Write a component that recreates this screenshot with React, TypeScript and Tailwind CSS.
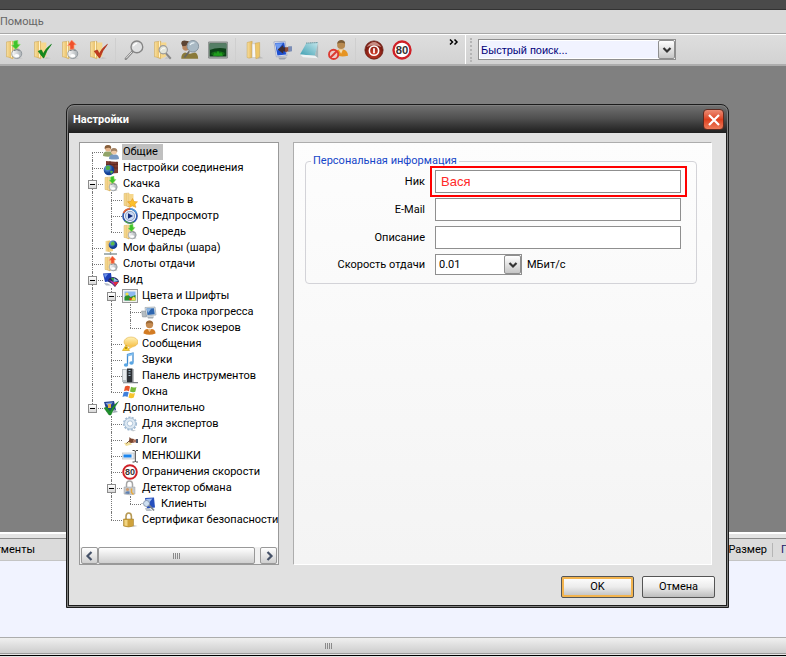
import type { ReactNode } from "react"
import clsx from "clsx"

/* ---------- icons, all on a 16x16 grid ---------- */

const Folder = () => (
    <>
        <path d="M2 1.5 7 1v14l-4-1.5H2z" fill="url(#folder)" stroke="#c9a14a" strokeWidth=".4" />
        <path d="M7 2h4.5v11L7 15z" fill="#f6d78c" />
        <path d="M6 1v13" stroke="#fff3cd" strokeWidth=".8" />
        <path d="M11.5 13.5 15 14.5l-5 .8z" fill="#b9b9b9" opacity=".6" />
    </>
)

const Bottle = () => (
    <>
        <ellipse cx="10.2" cy="11" rx="4" ry="3.8" fill="url(#silver)" stroke="#8d9499" strokeWidth=".7" />
        <path d="M8 8.5q2.300-1.500 4.500 0" stroke="#6d7478" strokeWidth=".7" fill="none" />
        <ellipse cx="10.200" cy="12.500" rx="2" ry="1.300" fill="#fff" />
    </>
)

const icons: Record<string, ReactNode> = {
    download: (
        <>
            <Folder />
            <Bottle />
            <path d="M7.500 1 11 0v3.300l2 .2-3.500 4L6 4.200l1.700-.2z" fill="#3fc32a" stroke="#8be070" strokeWidth=".5" />
        </>
    ),
    upload: (
        <>
            <Folder />
            <Bottle />
            <path d="M9.300 0 13 3.800l-1.800.1v3.300L8 7.500V4.300l-2 .3z" fill="#f0522c" stroke="#ffa083" strokeWidth=".5" />
        </>
    ),
    folderCheck: (
        <>
            <Folder />
            <path d="M5 9 7.500 8l1.500 3q2-4.500 6.500-7.500Q11.500 8 9.300 14.500z" fill="#138a1e" stroke="#0b7a14" strokeWidth=".6" />
        </>
    ),
    folderRed: (
        <>
            <Folder />
            <path d="M5 9 7.500 8l1.500 3q2-4.500 6.500-7.500Q11.500 8 9.300 14.500z" fill="#c43a20" stroke="#a83018" strokeWidth=".6" />
        </>
    ),
    magnifier: (
        <>
            <path d="M1.500 15 7 9" stroke="#858585" strokeWidth="2" strokeLinecap="round" />
            <path d="M1.700 14.600 6.500 9.400" stroke="#e4e4e4" strokeWidth=".8" />
            <circle cx="10.300" cy="5.500" r="4.700" fill="#dfe0e1" stroke="#858585" strokeWidth="1.100" />
            <path d="M7.500 5q.7-2.200 3-2.300" stroke="#fff" fill="none" />
        </>
    ),
    folderSearch: (
        <>
            <Folder />
            <path d="M11 10.500 15 15" stroke="#888" strokeWidth="1.600" />
            <circle cx="9" cy="7.800" r="3.300" fill="#dfe8ec" fillOpacity=".8" stroke="#9b9b9b" strokeWidth=".9" />
            <path d="M7 8.500q1.500-2.800 3.500-2" stroke="#fff" fill="none" strokeWidth=".8" />
        </>
    ),
    userSearch: (
        <>
            <path d="M1 15q0-4.500 3-5l4 1 4-1q2.500 1 2.500 5z" fill="#8a7a3a" />
            <path d="M1.500 1h5.500v6.500q-3 2.500-5-.5z" fill="#b98760" />
            <path d="M1 3q0-3 3.500-2.500L7 1 5 4.500 2 5z" fill="#5d4433" />
            <path d="M7.500 9 3.500 14" stroke="#666" strokeWidth="1.300" />
            <circle cx="10.300" cy="5" r="4.600" fill="#a9b9c4" stroke="#8795a0" strokeWidth=".8" />
            <path d="M8 4q1.200-2 3.500-1.700" stroke="#e9f2f6" fill="none" />
        </>
    ),
    monitor: (
        <>
            <rect x="0" y="1.500" width="16" height="13" rx="1" fill="#a3a8a6" stroke="#6f7472" strokeWidth=".5" />
            <rect x="1.300" y="2.800" width="13.400" height="10.400" fill="#0d4218" />
            <path d="M1.300 2.800h13.400V7q-7-1.500-13.400 1z" fill="#557f66" />
            <ellipse cx="8" cy="11" rx="5.500" ry="2" fill="#146e17" />
            <path d="M4 12.500 5.500 9.500l1 1.500 1.500-2.500 1.500 2.500 1-1.500 1.500 3z" fill="#1f9e1c" />
        </>
    ),
    folderOpen: (
        <>
            <path d="M2.500 2 6.500 1v13L4 14.500 2.500 14z" fill="url(#folder)" stroke="#c9a14a" strokeWidth=".4" />
            <path d="M6.500 3h3.500v11H6.500z" fill="#f7f7f7" stroke="#bbb" strokeWidth=".4" />
            <path d="M9 2.500 12.500 2v12l-3 1z" fill="#edc76c" stroke="#c9a14a" strokeWidth=".4" />
            <path d="m12.500 13 3 1.500-5 .5z" fill="#aaa" opacity=".6" />
        </>
    ),
    screenBack: (
        <>
            <path d="M1.500 1.500 10.500 1l1.500 11.500-8.500 1z" fill="#e4e8f2" stroke="#8b95b5" strokeWidth=".5" />
            <path d="M2.500 2.300 9.800 2l1.500 9.500-7 .8z" fill="#1d4fd0" />
            <path d="m2.700 2.500 6 0-4.500 6z" fill="#6f9cf2" />
            <path d="m4.500 7.500 4.500-3.500v1.800q2.500 0 3 .7v2.500q-1.500.3-3 0v2z" fill="#3c2d35" />
            <path d="M10.500 6 13.500 5.500v3.500l-3 .5z" fill="#8d4a35" />
            <path d="M13 5h3v4l-3 .5z" fill="#7a8cb5" />
            <path d="M5 14h7l-2 1.500H6z" fill="#9aa0ac" />
        </>
    ),
    notepad: (
        <>
            <path d="m5 2.500 9.500-.5-2.500 10.500L0 11.500z" fill="url(#teal)" />
            <path d="M14.500 2v12.500L12 12.500z" fill="#a6b6ba" />
            <path d="m0 11.500 12 1 2.500 2-12-.8z" fill="#eef3f4" />
            <path d="m5 2.500 9.500-.5" stroke="#5c8b95" strokeWidth=".9" strokeDasharray="1 .6" />
        </>
    ),
    userBan: (
        <>
            <circle cx="10.500" cy="4" r="3.200" fill="#b88a50" />
            <path d="M7.300 3q.5-3 3.300-3 3 0 3.100 3-3-1.500-6.400 0z" fill="#7b5c35" />
            <path d="M5.500 12q.5-4 3.500-4.500h3.200Q16 8.500 16 12.500q-5 1.500-10.500-.5z" fill="#e69422" />
            <path d="m8.500 7.500 3.500 0-1.500 3.500z" fill="#f6dcae" />
            <circle cx="4.500" cy="11.500" r="3.700" fill="#ecc9c5" stroke="#dc3a31" strokeWidth="1.500" />
            <path d="m2 14 5-5" stroke="#dc3a31" strokeWidth="1.500" />
        </>
    ),
    power: (
        <>
            <circle cx="8" cy="8" r="7.300" fill="url(#red)" stroke="#6b2118" strokeWidth=".6" />
            <path d="M2 5.500Q8-2.500 14 5.500 8 3 2 5.500z" fill="#dba79e" opacity=".8" />
            <circle cx="8" cy="8.500" r="3.700" fill="none" stroke="#fff" strokeWidth="1.300" />
            <path d="M8 6.500v4" stroke="#fff" strokeWidth="1.400" />
        </>
    ),
    speed: (
        <>
            <circle cx="8" cy="8" r="6.800" fill="#fff" stroke="#cf2027" strokeWidth="1.900" />
            <text x="8" y="11.200" textAnchor="middle" fontSize="9" fontWeight="700" fontFamily="Liberation Sans" fill="#333">
                80
            </text>
        </>
    ),
    users: (
        <>
            <path d="M0 12q0-4 3-4.500h4q3 .5 3 4.500-5 1.500-10 0z" fill="#91a469" />
            <circle cx="5" cy="4.500" r="3" fill="#e5b58c" />
            <path d="M1.700 5Q1 1 5 1t3 4Q6 2.500 1.700 5z" fill="#875f3c" />
            <path d="M6 15q0-4 3-4.500h4q3 .5 3 4.500-5 1-10 0z" fill="#7798c2" />
            <circle cx="11" cy="7.500" r="3" fill="#edc8a5" />
            <path d="M7.700 8Q7.300 4 11 4t3.300 4q-3-2.500-6.600 0z" fill="#a28365" />
        </>
    ),
    connection: (
        <>
            <path d="m3 1 12 1v11l-12 1z" fill="#7b3b31" />
            <path d="M3 4.500h12M3 8h12M7 1v3.500M11 4.500V8M14 1.500v3" stroke="#57241d" strokeWidth=".7" />
            <circle cx="6" cy="10" r="5.300" fill="url(#globe)" />
            <path d="M3 6.500q3-2 4 .5t-2 3-2-3.500M7 11q3-1 3 1l-2 2z" fill="#4fae45" />
        </>
    ),
    folderStar: (
        <>
            <Folder />
            <path d="m10.500 6.500 1.500 3 3.500.3-2.500 2.400.8 3.300-3.300-1.700-3 1.700.6-3.500-2.600-2.200 3.500-.4z" fill="#fbc02c" stroke="#e08e1b" strokeWidth=".5" />
        </>
    ),
    player: (
        <>
            <circle cx="8" cy="8" r="7" fill="#fff" stroke="#2f57ad" strokeWidth="1.700" />
            <path d="M1.500 5A7 7 0 0 1 8 1" stroke="#e8612b" strokeWidth="1.600" fill="none" />
            <path d="M8 1a7 7 0 0 1 6.500 4.500" stroke="#4f96d8" strokeWidth="1.600" fill="none" />
            <path d="M3 13a7 7 0 0 0 9 1" stroke="#55a63e" strokeWidth="1.400" fill="none" />
            <circle cx="8" cy="8" r="4.700" fill="#c9d9f2" stroke="#7d93bb" strokeWidth=".9" />
            <path d="m6 5.200 5 2.800-5 2.800z" fill="#132a78" />
        </>
    ),
    share: (
        <>
            <path d="M2.500 1 7 .5V12l-3.500-.5h-1z" fill="url(#folder)" />
            <path d="M6 1.500h4V11l-4 1z" fill="#f3d27f" />
            <circle cx="10" cy="4.800" r="4.300" fill="url(#globe)" />
            <path d="M8 2.500q3-2 3.500.5t-2 2.500-1.500-3" fill="#58b84c" />
            <path d="M1 14h13M7.500 12v3" stroke="#8c9a9c" strokeWidth="1.300" />
        </>
    ),
    view: (
        <>
            <path d="M0 1.500 8 1l1 8-7 1z" fill="#1d3fb8" />
            <path d="m1 2.300 4-.2-3 4z" fill="#6f97ef" />
            <path d="M5 9.500q0-4 5-4.500 5 .5 6 4.500l-4 5.500q-2-3-7-5.500z" fill="#232a63" />
            <path d="M8 6h3l-.5 4z" fill="#3aa13b" />
            <path d="m11 6 4.500 3-5 1z" fill="#8fc2ee" />
            <path d="m10.500 10 5 0-3.500 4.500z" fill="#e32f3a" />
            <path d="m6 8 4.500 2L12 14z" fill="#c237b8" />
            <path d="m1 11 4 .5 3 2H3z" fill="#b3bac5" />
        </>
    ),
    picture: (
        <>
            <rect x=".5" y="1.500" width="15" height="13" fill="#f2f2f2" stroke="#989898" />
            <rect x="2.500" y="3.500" width="11" height="9" fill="#8db9f2" />
            <path d="M2.500 12.500V9q3-4 6 0l5-2v5.500z" fill="#2e8e28" />
            <path d="m8 12.500 3.500-4 2 1.500v2.500z" fill="#f0e04c" />
            <circle cx="5" cy="6" r="1.600" fill="#f0e04c" />
            <circle cx="8.500" cy="11" r="1.300" fill="#d63529" />
        </>
    ),
    progress: (
        <>
            <path d="M4 3.500 14 3l1 8-10 1z" fill="#dbe2e7" stroke="#8d99a1" strokeWidth=".6" />
            <path d="m5.500 4.500 7.500-.3.700 6-7.200.8z" fill="#2f67b0" />
            <path d="m5.500 4.500 5-.2L7 9z" fill="#8bb6e4" />
            <path d="M.5 7h4l1 6h-4z" fill="#b5bdc2" stroke="#868f94" strokeWidth=".5" />
            <path d="M6 12.500h7l-1 2H7z" fill="#a7afb4" />
        </>
    ),
    user: (
        <>
            <circle cx="8.500" cy="4.500" r="3.700" fill="#c58b51" />
            <path d="M4.800 4Q5 .5 8.500.5T12.200 4Q9 2.200 4.800 4z" fill="#9c6a38" />
            <path d="M2.500 13.500Q2.500 9.500 6 9h5q3.500.5 3.500 4.500-6 2.500-12 0z" fill="#d37c24" />
            <path d="M6.500 9h4l-2 3z" fill="#f3c893" />
        </>
    ),
    message: (
        <>
            <ellipse cx="9" cy="6" rx="7" ry="5" fill="url(#bubble)" stroke="#dda83a" strokeWidth=".5" />
            <path d="m8 10 3.500.5L6 14z" fill="#f8c758" />
            <path d="m4 9 3.500 5.500H.5z" fill="#ffd52c" stroke="#c99a12" strokeWidth=".6" />
            <path d="M4 11v2" stroke="#6a4a00" />
        </>
    ),
    music: (
        <>
            <path d="M5.500 12.500V2.500L11 1v9.500" stroke="#3f8bd0" strokeWidth="1.300" fill="none" />
            <path d="M5.500 3.500 11 2" stroke="#7fbdf0" strokeWidth="2" />
            <ellipse cx="4" cy="13" rx="2.200" ry="1.700" fill="#59a6e4" />
            <ellipse cx="9.500" cy="11" rx="2.200" ry="1.700" fill="#59a6e4" />
        </>
    ),
    toolbar: (
        <>
            <path d="M0 1h5v13H0z" fill="#b9bfc3" />
            <path d="M1 2h3v10H1z" fill="#e9edef" />
            <path d="M5 .5h5.500v14H5z" fill="#2d3136" />
            <path d="M6.500 2.500h2M6.500 5h2M6.500 7.500h2" stroke="#a3bccb" />
            <path d="M10.500 1h1v13h4.500v1.300H1v-1h9.500z" fill="#777d82" />
        </>
    ),
    windows: (
        <>
            <path d="M3 2.500Q5.500 1 8 2.500L7 7.200Q4.500 6 2 7.200z" fill="#e8542a" />
            <path d="M9 2.800q2.500 1.500 5.500.2l-1.200 4.700q-2.800 1.300-5.300-.2z" fill="#74b83a" />
            <path d="M1.700 8.300q2.500-1.200 5 0l-1.200 4.700Q3 11.700.5 13z" fill="#3f7fdb" />
            <path d="M7.700 8.700q2.500 1.300 5.300.2L11.800 13.500q-2.700 1.500-5.300 0z" fill="#f7c52d" />
        </>
    ),
    advanced: (
        <>
            <path d="m1 2 10-1 2 9-9 2z" fill="#22408f" />
            <path d="m2.500 3 7.500-.8-4 5z" fill="#7f9fe0" />
            <path d="M5 4h3v4H5z" fill="#e7b14b" />
            <path d="M1 8 4 7l3 4Q10 5 15.500 1.500 11 7.500 8 15H6z" fill="#1f8f2c" stroke="#0f6b1b" strokeWidth=".4" />
            <path d="m11 9 4 3-5 1z" fill="#a7afbb" />
        </>
    ),
    gear: (
        <>
            <circle cx="8" cy="7.500" r="6.300" fill="none" stroke="#a3bcd5" strokeWidth="1.600" strokeDasharray="2.200 1.200" />
            <circle cx="8" cy="7.500" r="5.500" fill="#dfeaf4" stroke="#9db6ce" strokeWidth=".8" />
            <circle cx="8" cy="7.500" r="2.700" fill="#fff" stroke="#9db6ce" strokeWidth=".8" />
            <path d="m9 14 5 0-3 1.500z" fill="#c3c9ce" />
        </>
    ),
    logs: (
        <>
            <path d="m2 11 6-1 2 2.500-6 1.500z" fill="#f1df9a" />
            <path d="m4.500 11.500 4-4" stroke="#55331d" strokeWidth=".8" />
            <path d="M7.500 5 9 6.500l3 .5v3.500q-3.500 1-5-.5z" fill="#7a4630" />
            <path d="M11 7.500h3V10.500h-3z" fill="#b07560" />
            <path d="M14 7h2v4h-2z" fill="#4a556b" />
        </>
    ),
    rename: (
        <>
            <path d="M0 5h12v6H0z" fill="#e7ecf2" stroke="#a9b1ba" strokeWidth=".6" />
            <path d="M1.500 6.500h8v3h-8z" fill="#1c86ee" />
            <path d="M10.500 2.500h2l.8.8.8-.8h2M10.500 14h2l.8-.8.8.8h2M13.300 3v10.500" stroke="#444" fill="none" />
        </>
    ),
    detector: (
        <>
            <path d="M4.500 8V4.500q0-3.500 3-3.500t3 3.500V8" stroke="#a5a5a5" strokeWidth="1.500" fill="none" />
            <path d="M2 7h11v7q-5.500 1.500-11 0z" fill="#c6c9cb" stroke="#9ca0a4" strokeWidth=".5" />
            <circle cx="5.500" cy="9.500" r="1.600" fill="#cf9b6e" />
            <path d="M3 13.500q.5-3 4.500-2v2.500z" fill="#5f80b0" />
            <path d="M9.500 8.500v4l2 2" stroke="#e9a93a" strokeWidth="1.500" fill="none" />
        </>
    ),
    clients: (
        <>
            <path d="M4 2 13 1.500l1 10-8 1z" fill="#2750bd" />
            <path d="m5 3 6.500-.5L7 8z" fill="#a3c0f1" />
            <path d="m8 9 5 5.500" stroke="#7b828c" strokeWidth="1.700" />
            <circle cx="5.500" cy="7.500" r="3" fill="#cfe0f2" stroke="#8494aa" strokeWidth=".9" />
            <path d="M0 7.500h2.500M4.500 12.500h3l3 2h-5z" stroke="#a5acb5" fill="#c1c7ce" strokeWidth=".7" />
        </>
    ),
    lock: (
        <>
            <path d="M4 8V4.500q0-3.500 2.700-3.500t2.700 3.500V8" stroke="#b79a55" strokeWidth="1.600" fill="none" />
            <path d="M1.500 7h10v7q-5 2-10 0z" fill="#cfa23b" stroke="#9b7622" strokeWidth=".5" />
            <path d="M2.500 8h3v6l-3-.5z" fill="#f2d582" />
            <path d="m12 13 3.500 1-5 1.300z" fill="#aaa" opacity=".6" />
        </>
    ),
}

function IconDefs() {
    return (
        <svg className="absolute h-0 w-0" aria-hidden="true">
            <defs>
                <linearGradient id="folder">
                    <stop offset="0" stopColor="#f9e0a0" />
                    <stop offset="1" stopColor="#e3b557" />
                </linearGradient>
                <linearGradient id="silver">
                    <stop offset="0" stopColor="#fff" />
                    <stop offset="1" stopColor="#aab0b4" />
                </linearGradient>
                <linearGradient id="teal" x1="0" y1="1" x2="1" y2="0">
                    <stop offset="0" stopColor="#3e9fb2" />
                    <stop offset="1" stopColor="#c4e7ec" />
                </linearGradient>
                <linearGradient id="bubble" x1="0" y1="0" x2="0" y2="1">
                    <stop offset="0" stopColor="#fff2b8" />
                    <stop offset="1" stopColor="#f6be45" />
                </linearGradient>
                <radialGradient id="globe" cx=".35" cy=".3">
                    <stop offset="0" stopColor="#7fc0f5" />
                    <stop offset="1" stopColor="#123f96" />
                </radialGradient>
                <radialGradient id="red" cx=".5" cy=".7">
                    <stop offset="0" stopColor="#d8402d" />
                    <stop offset="1" stopColor="#7b1c12" />
                </radialGradient>
            </defs>
        </svg>
    )
}

function Icon({ name, className }: { name: string; className?: string }) {
    return (
        <svg viewBox="0 0 16 16" className={clsx("shrink-0", className)} aria-hidden="true">
            {icons[name]}
        </svg>
    )
}

function Arrow({ dir }: { dir: "down" | "left" | "right" }) {
    const paths = { down: "M1.500 3 5 6.500 8.500 3", left: "M6.500 1 2.500 5l4 4", right: "M3.500 1 7.500 5l-4 4" }
    return (
        <svg viewBox="0 0 10 10" className="h-[10px] w-[10px]" aria-hidden="true">
            <path d={paths[dir]} fill="none" stroke={dir === "down" ? "#333" : "#465268"} strokeWidth="2.200" />
        </svg>
    )
}

/* ---------- main window ---------- */

const toolbarGroups = [
    [
        { icon: "download", label: "Скачка" },
        { icon: "folderCheck", label: "Скачанные файлы" },
        { icon: "upload", label: "Отдача" },
        { icon: "folderRed", label: "Отданные файлы" },
    ],
    [
        { icon: "magnifier", label: "Поиск" },
        { icon: "folderSearch", label: "Поиск файлов" },
        { icon: "userSearch", label: "Поиск юзеров" },
        { icon: "monitor", label: "Статистика" },
    ],
    [
        { icon: "folderOpen", label: "Открыть папку" },
        { icon: "screenBack", label: "Отошёл" },
        { icon: "notepad", label: "Блокнот" },
        { icon: "userBan", label: "Игнор" },
    ],
    [
        { icon: "power", label: "Выключение" },
        { icon: "speed", label: "Ограничения скорости" },
    ],
]

function DropDown({ id, label, value, className, selectClass }: {
    id: string
    label?: string
    value: string
    className: string
    selectClass: string
}) {
    return (
        <div className={clsx("relative h-[21px] border border-[#8f8f8f] bg-white", className)}>
            <select id={id} aria-label={label} className={clsx("block h-full w-full appearance-none outline-none", selectClass)}>
                <option>{value}</option>
            </select>
            <span className="pointer-events-none absolute inset-y-0 right-0 flex w-[17px] items-center justify-center rounded-xs border border-[#8f8f8f] bg-linear-to-b from-white to-[#c6c6c6]">
                <Arrow dir="down" />
            </span>
        </div>
    )
}

function Toolbar() {
    return (
        <div className="flex h-[31px] border-b-2 border-[#adadad] bg-linear-to-b from-[#dedede] to-[#d2d2d2]">
            <div className="flex w-[465px] items-center">
                {toolbarGroups.map((group, i) => (
                    <div key={i} className="flex items-center">
                        {i > 0 && <span className="mr-1 ml-[3px] h-6 w-px bg-[#cfcfcf]" />}
                        {group.map((item) => (
                            <button key={item.icon} type="button" aria-label={item.label} className="flex h-6 w-7 items-center justify-center">
                                <Icon name={item.icon} className="h-5 w-5" />
                            </button>
                        ))}
                    </div>
                ))}
                <button type="button" aria-label="Ещё" className="mr-[6px] mb-4 ml-auto">
                    <svg viewBox="0 0 10 6" className="h-[6px] w-[10px]" aria-hidden="true">
                        <path d="m1 .5 2.500 2.500L1 5.500M5.500.5 8 3 5.500 5.500" fill="none" stroke="#000" strokeWidth="1.500" />
                    </svg>
                </button>
            </div>
            <div className="flex items-center border-l border-white pl-1">
                <span className="mr-[6px] h-6 border-l-2 border-dotted border-[#b5b5b5]" />
                <DropDown
                    id="quick-search"
                    label="Быстрый поиск"
                    value="Быстрый поиск..."
                    className="w-[198px]"
                    selectClass="border border-white bg-[#f1f3ff] px-px font-[Liberation_Sans,sans-serif] text-[#00007a]"
                />
            </div>
        </div>
    )
}

function Grip() {
    return (
        <span className="flex gap-px">
            {[0, 1, 2, 3].map((i) => (
                <span key={i} className="h-[6px] w-px bg-[#8a8a8a]" />
            ))}
        </span>
    )
}

function TransferList() {
    return (
        <div className="border-t-2 border-white bg-[#e3e3e3] pt-1">
            <div className="flex h-[23px] items-center border-t border-b border-t-[#8b8b8b] border-b-[#c4c4c4] bg-[#dbdbdb]">
                <div className="flex w-[35px] justify-end overflow-hidden">Сегменты</div>
                <div className="ml-auto pr-[5px]">Размер</div>
                <div className="w-[14px] overflow-hidden border-l border-[#b5b5b5] pl-2 text-[#20206a]">П</div>
            </div>
            <div className="h-[76px] bg-[#f1f3ff]" />
            <div className="flex h-[17px] items-center justify-center border-t border-b border-t-[#adadad] border-b-[#9c9c9c] bg-linear-to-b from-[#f0f0f0] to-[#cdcdcd] pr-[130px]">
                <Grip />
            </div>
            <div className="h-[3px] border-t border-b border-t-[#e5e5e5] border-b-[#e5e5e5] bg-black" />
        </div>
    )
}

/* ---------- settings tree ---------- */

type Node = { icon: string; label: string; selected?: boolean; children?: Node[] }

const tree: Node[] = [
    { icon: "users", label: "Общие", selected: true },
    { icon: "connection", label: "Настройки соединения" },
    {
        icon: "download",
        label: "Скачка",
        children: [
            { icon: "folderStar", label: "Скачать в" },
            { icon: "player", label: "Предпросмотр" },
            { icon: "download", label: "Очередь" },
        ],
    },
    { icon: "share", label: "Мои файлы (шара)" },
    { icon: "upload", label: "Слоты отдачи" },
    {
        icon: "view",
        label: "Вид",
        children: [
            {
                icon: "picture",
                label: "Цвета и Шрифты",
                children: [
                    { icon: "progress", label: "Строка прогресса" },
                    { icon: "user", label: "Список юзеров" },
                ],
            },
            { icon: "message", label: "Сообщения" },
            { icon: "music", label: "Звуки" },
            { icon: "toolbar", label: "Панель инструментов" },
            { icon: "windows", label: "Окна" },
        ],
    },
    {
        icon: "advanced",
        label: "Дополнительно",
        children: [
            { icon: "gear", label: "Для экспертов" },
            { icon: "logs", label: "Логи" },
            { icon: "rename", label: "МЕНЮШКИ" },
            { icon: "speed", label: "Ограничения скорости" },
            { icon: "detector", label: "Детектор обмана", children: [{ icon: "clients", label: "Клиенты" }] },
            { icon: "lock", label: "Сертификат безопасности" },
        ],
    },
]

function Branch({ nodes, guides = [] }: { nodes: Node[]; guides?: boolean[] }) {
    return (
        <>
            {nodes.map((node, i) => {
                const last = i === nodes.length - 1
                const first = i === 0 && guides.length === 0
                return (
                    <li key={node.label}>
                        <div className="flex h-4 items-center whitespace-nowrap">
                            {guides.map((line, g) => (
                                <span key={g} className="h-full w-[19px] shrink-0 pl-3">
                                    {line && <span className="block h-full border-l border-dotted border-[#777]" />}
                                </span>
                            ))}
                            <span className="relative h-full w-[23px] shrink-0 pl-3">
                                <span
                                    className={clsx(
                                        "block border-l border-dotted border-[#777]",
                                        first ? "mt-2 h-2" : last ? "h-2" : "h-4",
                                    )}
                                />
                                <span className="absolute top-2 right-0 left-3 border-t border-dotted border-[#777]" />
                                {node.children && (
                                    <span className="absolute top-1 left-2 flex h-[9px] w-[9px] items-center justify-center border border-[#8c8c8c] bg-linear-to-b from-white to-[#d8d8d8]">
                                        <span className="h-px w-[5px] bg-black" />
                                    </span>
                                )}
                            </span>
                            <Icon name={node.icon} className="h-4 w-4" />
                            <span className={clsx("ml-[3px] h-4 pl-px leading-4", node.selected && "bg-[#c0c0c0] pr-[5px]")}>
                                {node.label}
                            </span>
                        </div>
                        {node.children && (
                            <ul>
                                <Branch nodes={node.children} guides={[...guides, !last]} />
                            </ul>
                        )}
                    </li>
                )
            })}
        </>
    )
}

function TreeScrollbar() {
    const arrow =
        "flex w-[17px] items-center justify-center rounded-xs border border-[#999] bg-linear-to-b from-white to-[#cfcfcf]"
    return (
        <div className="flex h-[17px] bg-[#f1f1f1] px-px">
            <button type="button" aria-label="Влево" className={arrow}>
                <Arrow dir="left" />
            </button>
            <div className="mr-[5px] flex flex-1 items-center justify-center rounded-xs border border-[#999] bg-linear-to-b from-white to-[#cfcfcf]">
                <Grip />
            </div>
            <button type="button" aria-label="Вправо" className={arrow}>
                <Arrow dir="right" />
            </button>
        </div>
    )
}

/* ---------- settings dialog ---------- */

const inputClass = "block h-[23px] w-full border border-[#8f8f8f] bg-white px-[5px] outline-none"

function PersonalInfo() {
    return (
        <fieldset className="rounded border border-[#d3d3d8] pr-[15px] pb-2">
            <legend className="ml-[5px] px-[2px] leading-[14px] text-[#1546c8]">Персональная информация</legend>
            <div className="grid grid-cols-[119px_1fr] items-center gap-x-[10px] gap-y-[5px] pt-[2px]">
                <label htmlFor="nick" className="text-right">Ник</label>
                <div className="relative">
                    <input
                        id="nick"
                        defaultValue="Вася"
                        className={clsx(inputClass, "font-[Liberation_Sans,sans-serif] text-[13px] text-[#ff2a2a]")}
                    />
                    <span className="pointer-events-none absolute -inset-y-1 -right-[6px] -left-[5px] border-2 border-[#f00]" />
                </div>
                <label htmlFor="email" className="text-right">E-Mail</label>
                <input id="email" className={inputClass} />
                <label htmlFor="about" className="text-right">Описание</label>
                <input id="about" className={inputClass} />
                <label htmlFor="speed" className="text-right whitespace-nowrap">Скорость отдачи</label>
                <div className="flex items-center gap-[5px]">
                    <DropDown id="speed" value="0.01" className="w-[87px]" selectClass="px-[3px]" />
                    <span>МБит/с</span>
                </div>
            </div>
        </fieldset>
    )
}

function SettingsDialog() {
    const button = "h-[22px] w-[73px] rounded-xs border border-[#555] bg-linear-to-b from-white via-[#ececec] to-[#bdbdbd]"
    return (
        <div
            role="dialog"
            aria-labelledby="dialog-title"
            className="absolute top-[104px] right-[57px] left-[66px] rounded-t-lg border border-[#1c1c1c] bg-[#808080] p-px"
        >
            <div className="flex h-[27px] items-center justify-between rounded-t-md bg-linear-to-b from-[#707070] from-0% via-[#4e4e4e] via-48% to-[#1f1f1f] to-100% pr-[3px] pl-[5px]">
                <h1 id="dialog-title" className="text-[11px] font-bold text-white">Настройки</h1>
                <button
                    type="button"
                    aria-label="Закрыть"
                    className="flex h-[21px] w-[21px] items-center justify-center rounded border border-[#5e2a20] bg-linear-to-b from-[#ec8c74] via-[#dd3f1d] to-[#ee7a58]"
                >
                    <svg viewBox="0 0 12 12" className="h-3 w-3" aria-hidden="true">
                        <path d="m1 1 10 10M11 1 1 11" stroke="#fff" strokeWidth="2.200" />
                    </svg>
                </button>
            </div>
            <div className="border border-t-0 border-[#1c1c1c] bg-[#e1e1e1] px-[10px] pt-[9px] pb-[7px]">
                <div className="mr-1 flex min-h-[423px] gap-[14px]">
                    <div className="flex w-[200px] shrink-0 flex-col overflow-hidden border border-[#999] bg-white">
                        <ul className="flex-1 overflow-hidden pt-px">
                            <Branch nodes={tree} />
                        </ul>
                        <TreeScrollbar />
                    </div>
                    <div className="flex-1 border border-t-[#adadad] border-r-white border-b-white border-l-[#adadad] bg-linear-to-b from-[#fdfdfd] to-[#f4f4f4] pt-[11px] pr-[14px] pl-[11px]">
                        <PersonalInfo />
                    </div>
                </div>
                <div className="mt-[11px] mr-px flex justify-end gap-2">
                    <button type="button" className={clsx(button, "shadow-[inset_0_0_0_2px_#f3b44e]")}>OK</button>
                    <button type="button" className={button}>Отмена</button>
                </div>
            </div>
        </div>
    )
}

export default function App() {
    return (
        <div className="relative flex min-h-screen flex-col overflow-hidden bg-[#808080] font-[Roboto,Noto_Sans,sans-serif] text-[11px] leading-[14px] text-black">
            <IconDefs />
            <div className="h-[10px] border-b border-[#333] bg-[#4a4a4a]" />
            <nav className="flex h-6 items-center border-b border-[#a8a8a8] bg-[#d9d9d9]">
                <a href="#help" className="text-[#666]">Помощь</a>
            </nav>
            <div className="border-t border-white">
                <Toolbar />
            </div>
            <main className="flex-1" />
            <TransferList />
            <SettingsDialog />
        </div>
    )
}
